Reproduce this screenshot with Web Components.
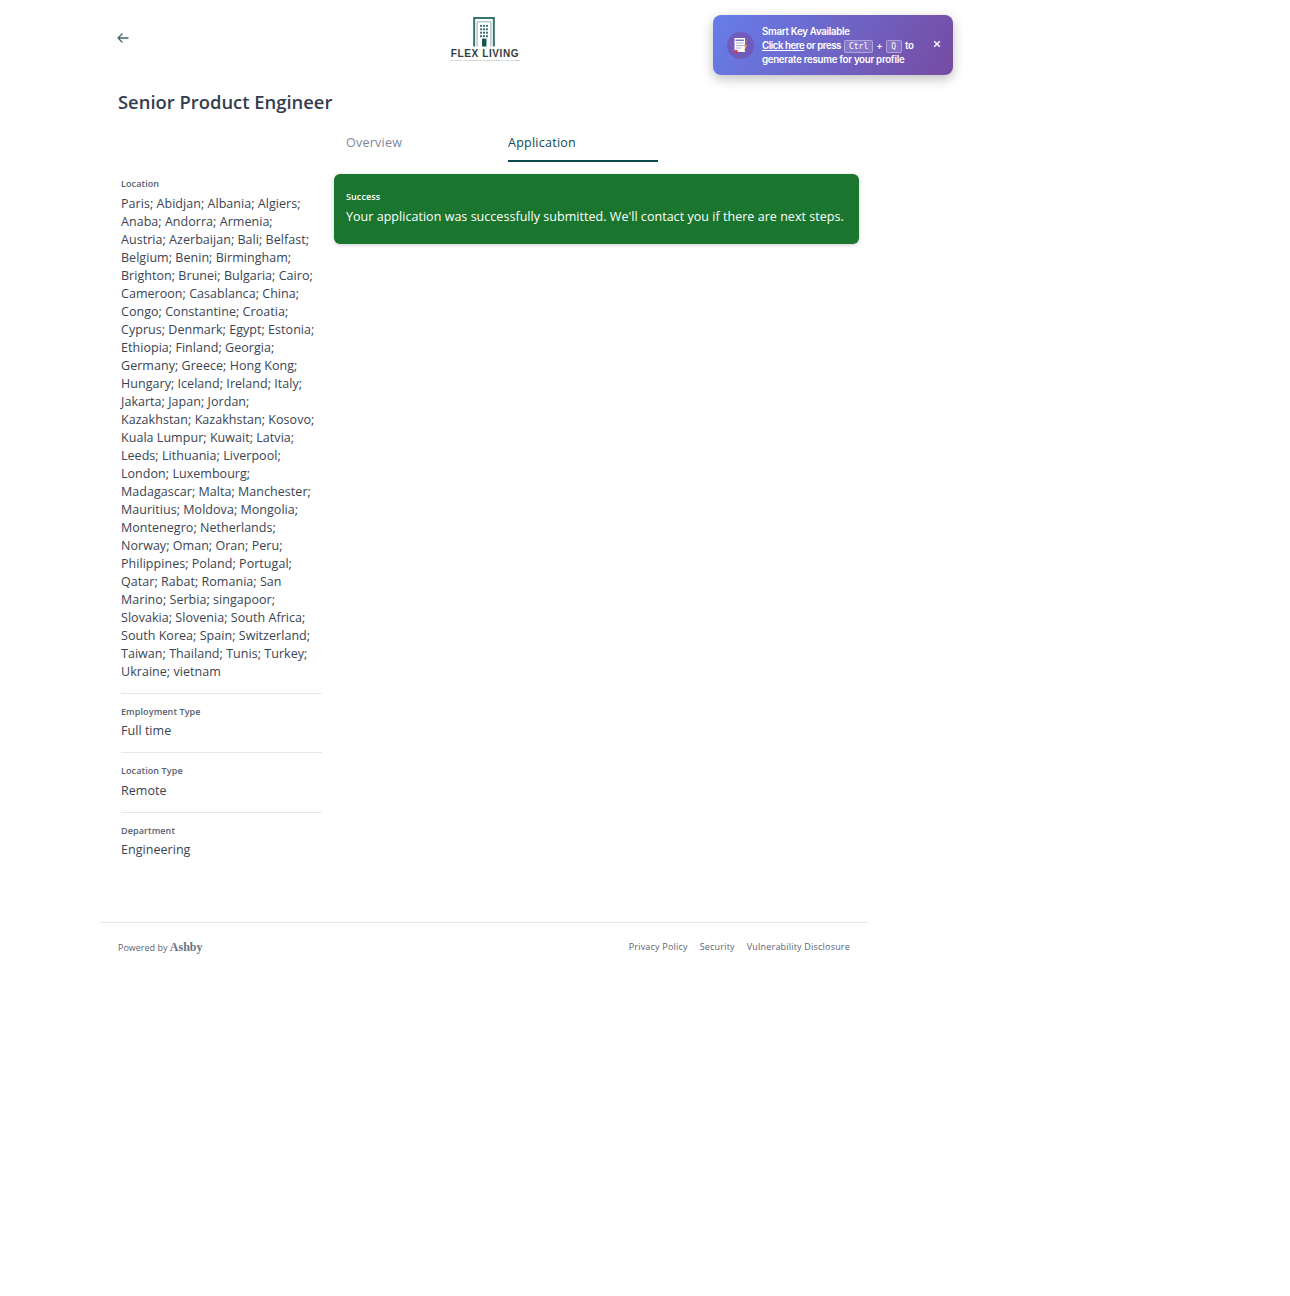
<!DOCTYPE html>
<html>
<head>
<meta charset="utf-8">
<style>
  html, body { margin: 0; padding: 0; background: #fff; }
  body { font-family: "Open Sans", sans-serif; color: #3a4453; width: 1290px; height: 1296px; overflow: hidden; }
</style>
</head>
<body>
<job-page></job-page>
<script>
class JobHeader extends HTMLElement {
  constructor () {
    super()
    this.attachShadow({ mode: 'open' }).innerHTML = `
      <style>
        :host { display: block; height: 75px; position: relative; }
        .back { position: absolute; left: 17px; top: 32px; width: 12px; height: 12px; display: block; }
        .logo { position: absolute; left: 345px; top: 17px; width: 80px; height: 46px; display: flex; flex-direction: column; align-items: center; }
        .logo svg { display: block; margin-left: -2px; }
        .name { font: 700 10px/10px "Liberation Sans", sans-serif; letter-spacing: .62px; color: #333e3c; margin-top: 2.500px; white-space: nowrap; }
        .tag { font: 700 2.500px/4px "Liberation Sans", sans-serif; letter-spacing: .2px; color: #8fa3a0; white-space: nowrap; margin-top: 0; }
      </style>
      <svg class="back" viewBox="0 0 12 12" fill="none" stroke="#3d6a70" stroke-width="1.3"><path d="M11.5 6H1M5.5 1.5 1 6l4.500 4.500"/></svg>
      <div class="logo">
        <svg width="22" height="30" viewBox="0 0 22 30">
          <path d="M1 30V1h20v29" fill="none" stroke="#357370" stroke-width="2"/>
          <path d="M4 30V5h14v25" fill="none" stroke="#8fb0ad" stroke-width="1"/>
          <rect x="9" y="22" width="4.500" height="8" fill="#17534f"/>
          <g fill="#3b6f6c">
            <rect x="7" y="8" width="2" height="2"/><rect x="10" y="8" width="2" height="2"/><rect x="13" y="8" width="2" height="2"/>
            <rect x="7" y="11.500" width="2" height="2"/><rect x="10" y="11.500" width="2" height="2"/><rect x="13" y="11.500" width="2" height="2"/>
            <rect x="7" y="15" width="2" height="2"/><rect x="10" y="15" width="2" height="2"/><rect x="13" y="15" width="2" height="2"/>
            <rect x="7" y="18.500" width="2" height="2"/><rect x="10" y="18.500" width="2" height="2"/><rect x="13" y="18.500" width="2" height="2"/>
          </g>
        </svg>
        <div class="name">FLEX LIVING</div>
        <div class="tag">STYLISH APARTMENTS IN STRATEGIC LOCATIONS</div>
      </div>
    `
  }
}
customElements.define('job-header', JobHeader)

class SmartKeyToast extends HTMLElement {
  constructor () {
    super()
    this.attachShadow({ mode: 'open' }).innerHTML = `
      <style>
        :host { position: absolute; left: 713px; top: 15px; width: 240px; height: 60px; box-sizing: border-box; border-radius: 8px;
          background: linear-gradient(120deg, #667eea 0%, #764ba2 100%); box-shadow: 0 4px 12px rgba(0,0,0,.25);
          color: #fff; font: 600 9.700px/14px Inter, sans-serif; display: flex; align-items: center; padding: 1px 0 0 14px; letter-spacing: -.28px; }
        .icon { width: 27px; height: 27px; border-radius: 50%; background: rgba(118,75,162,.6); flex: none; display: flex; align-items: center; justify-content: center; }
        .text { margin-left: 8px; white-space: nowrap; width: 161px; }
        .text div { height: 14px; }
        .text .keys { letter-spacing: -.45px; }
        a { color: #fff; text-decoration: underline; }
        kbd { display: inline-block; height: 13px; box-sizing: border-box; font: 400 8px/11px "DejaVu Sans Mono", monospace; background: rgba(255,255,255,.15); border: 1px solid rgba(255,255,255,.35); border-radius: 2px; padding: 0 4px; vertical-align: 0; letter-spacing: 0; margin: 0 1px; }
        kbd.q { padding: 0 4.500px; margin: 0 1.500px; }
        .close { position: absolute; left: 220px; top: 25px; width: 8px; height: 8px; display: block; }
      </style>
      <span class="icon">
        <svg width="16" height="18" viewBox="0 0 16 18">
          <rect x="1.500" y="1" width="10.500" height="14" fill="#fff"/>
          <path d="M2.500 2.500h8.500V4h-8.500z" fill="#7a72c4"/>
          <path d="M3 6h7.500M3 8.500h7.500M3 11h5.500" stroke="#a9a5da" stroke-width="1"/>
          <circle cx="3" cy="14.500" r="1.800" fill="#e0324b"/>
          <path d="M14.800 1.500 10.500 9.500h2L9.500 17.500 14 8h-2z" fill="#f2a93b"/>
        </svg>
      </span>
      <div class="text">
        <div>Smart Key Available</div>
        <div class="keys"><a>Click here</a> or press <kbd>Ctrl</kbd> + <kbd class="q">Q</kbd> to</div>
        <div>generate resume for your profile</div>
      </div>
      <svg class="close" viewBox="0 0 10 10" stroke="#fff" stroke-width="1.800"><path d="M1.500 1.500l7 7M8.500 1.500l-7 7"/></svg>
    `
  }
}
customElements.define('smart-key-toast', SmartKeyToast)

class JobTabs extends HTMLElement {
  constructor () {
    super()
    this.attachShadow({ mode: 'open' }).innerHTML = `
      <style>
        :host { display: flex; height: 36px; padding-left: 12px; font-size: 12.500px; line-height: 18px; letter-spacing: .25px; }
        .tab { display: block; width: 150px; margin-right: 12px; padding-top: 8px; box-sizing: border-box; height: 36px; color: #7d8799; }
        .on { color: #0f4a52; border-bottom: 2px solid #0b4a4e; }
      </style>
      <div class="tab">Overview</div>
      <div class="tab on">Application</div>
    `
  }
}
customElements.define('job-tabs', JobTabs)

class SuccessAlert extends HTMLElement {
  constructor () {
    super()
    this.attachShadow({ mode: 'open' }).innerHTML = `
      <style>
        :host { display: block; background: #1a762e; color: #fff; border-radius: 6px; height: 70px; box-sizing: border-box; padding: 16px 12px 0;
          box-shadow: 0 1px 4px rgba(0,0,0,.2); }
        .title { font-size: 9px; line-height: 14px; font-weight: 600; letter-spacing: .1px; }
        .body { font-size: 12.500px; line-height: 18px; margin-top: 4px; white-space: nowrap; letter-spacing: .035px; }
      </style>
      <div class="title"><slot name="title"></slot></div>
      <div class="body"><slot></slot></div>
    `
  }
}
customElements.define('success-alert', SuccessAlert)

class JobField extends HTMLElement {
  constructor () {
    super()
    this.attachShadow({ mode: 'open' }).innerHTML = `
      <style>
        :host { display: block; padding: 11px 0 12px; border-bottom: 1px solid #e6e6e6; }
        :host(:last-child) { border-bottom: 0; }
        .label { font-size: 9px; line-height: 14px; font-weight: 600; color: #566070; letter-spacing: .1px; }
        .value { font-size: 12.500px; line-height: 18px; margin-top: 3.500px; color: #3a4453; padding-right: 4px; letter-spacing: .04px; }
      </style>
      <div class="label"><slot name="label"></slot></div>
      <div class="value"><slot></slot></div>
    `
  }
}
customElements.define('job-field', JobField)

class JobFooter extends HTMLElement {
  constructor () {
    super()
    this.attachShadow({ mode: 'open' }).innerHTML = `
      <style>
        :host { display: flex; justify-content: space-between; align-items: center; border-top: 1px solid #e6e6e6; height: 47px; padding: 0 18px; font-size: 9px; color: #5a6473; }
        .brand { font: 700 12px/14px "Liberation Serif", serif; color: #6b7488; }
        .links { display: flex; gap: 12px; letter-spacing: .2px; }
      </style>
      <div>Powered by <span class="brand">Ashby</span></div>
      <div class="links"><span>Privacy Policy</span><span>Security</span><span>Vulnerability Disclosure</span></div>
    `
  }
}
customElements.define('job-footer', JobFooter)

class JobPage extends HTMLElement {
  constructor () {
    super()
    this.attachShadow({ mode: 'open' }).innerHTML = `
      <style>
        :host { display: block; width: 768px; margin-left: 100px; position: relative; }
        h1 { margin: 0; padding: 13px 0 0 18px; height: 51px; box-sizing: border-box; font-size: 18.400px; line-height: 28px; font-weight: 600; color: #333d4d; }
        .cols { display: grid; grid-template-columns: 201px 525px; column-gap: 12px; padding-left: 21px; height: 796px; }
        .side { padding-top: 51px; }
        .side job-field:first-child { padding-top: 0; }
        success-alert { margin-top: 12px; }
      </style>
      <job-header></job-header>
      <h1>Senior Product Engineer</h1>
      <div class="cols">
        <div class="side">
          <job-field><span slot="label">Location</span>Paris; Abidjan; Albania; Algiers; Anaba; Andorra; Armenia; Austria; Azerbaijan; Bali; Belfast; Belgium; Benin; Birmingham; Brighton; Brunei; Bulgaria; Cairo; Cameroon; Casablanca; China; Congo; Constantine; Croatia; Cyprus; Denmark; Egypt; Estonia; Ethiopia; Finland; Georgia; Germany; Greece; Hong Kong; Hungary; Iceland; Ireland; Italy; Jakarta; Japan; Jordan; Kazakhstan; Kazakhstan; Kosovo; Kuala Lumpur; Kuwait; Latvia; Leeds; Lithuania; Liverpool; London; Luxembourg; Madagascar; Malta; Manchester; Mauritius; Moldova; Mongolia; Montenegro; Netherlands; Norway; Oman; Oran; Peru; Philippines; Poland; Portugal; Qatar; Rabat; Romania; San Marino; Serbia; singapoor; Slovakia; Slovenia; South Africa; South Korea; Spain; Switzerland; Taiwan; Thailand; Tunis; Turkey; Ukraine; vietnam</job-field>
          <job-field><span slot="label">Employment Type</span>Full time</job-field>
          <job-field><span slot="label">Location Type</span>Remote</job-field>
          <job-field><span slot="label">Department</span>Engineering</job-field>
        </div>
        <div class="main">
          <job-tabs></job-tabs>
          <success-alert><span slot="title">Success</span>Your application was successfully submitted. We'll contact you if there are next steps.</success-alert>
        </div>
      </div>
      <job-footer></job-footer>
    `
  }
}
customElements.define('job-page', JobPage)

// toast sits over the page, not in the job column
document.body.appendChild(document.createElement('smart-key-toast'))
</script>
</body>
</html>
